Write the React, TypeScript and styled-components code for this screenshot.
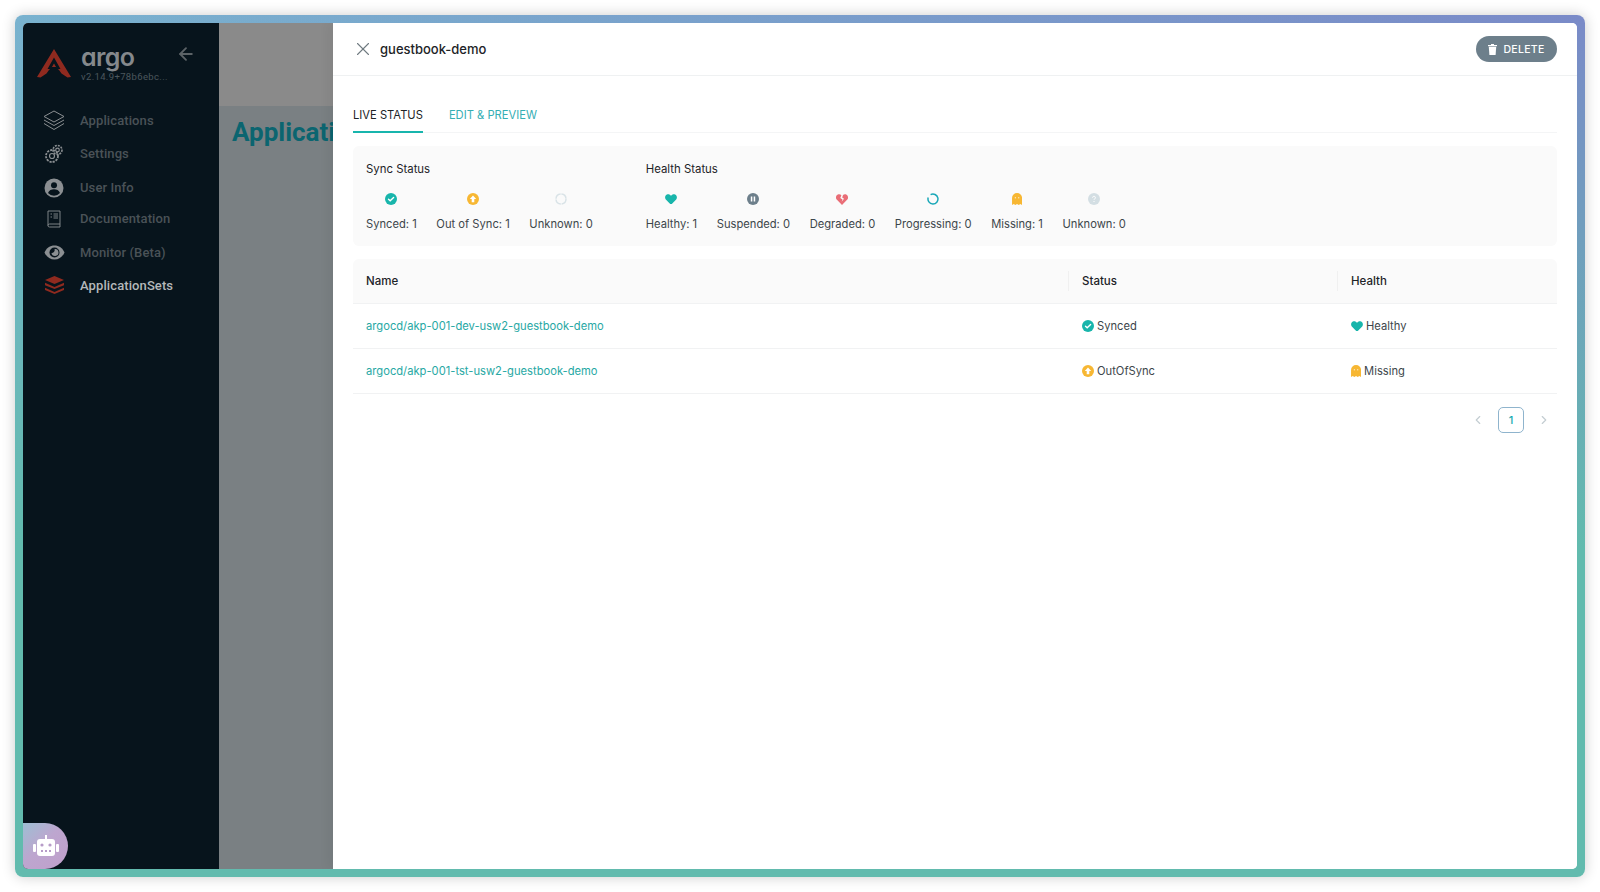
import React from 'react';
import styled, { createGlobalStyle } from 'styled-components';
import { X, ArrowLeft, ChevronLeft, ChevronRight } from 'lucide-react';

const GlobalStyle = createGlobalStyle`
  html, body {
    margin: 0;
    padding: 0;
    height: 892px;
    overflow: hidden;
    background: #fff;
    font-family: Inter, "Liberation Sans", sans-serif;
  }
`;

const Page = styled.div`
  box-sizing: border-box;
  height: 892px;
  padding: 15px;
`;

const Frame = styled.div`
  box-sizing: border-box;
  height: 862px;
  padding: 8px;
  border-radius: 8px;
  background:
    linear-gradient(180deg, rgba(95, 188, 174, 0) 0%, #62bbae 62%),
    linear-gradient(90deg, #79b2cf 0%, #7a8ac8 100%);
  box-shadow: 0 0 14px rgba(0, 0, 0, 0.2);
`;

const Window = styled.div`
  position: relative;
  display: flex;
  height: 846px;
  border-radius: 5px;
  overflow: hidden;
  background: #fff;
`;

const Sidebar = styled.aside`
  flex: 0 0 196px;
  background: #07141c;
  display: flex;
  flex-direction: column;
`;

const Brand = styled.div`
  display: flex;
  padding: 26px 0 0 14px;
  height: 46px;
`;

const BrandText = styled.div`
  margin-left: 10px;
  display: flex;
  flex-direction: column;
  width: 90px;
`;

const BrandName = styled.div`
  font-family: Inter, sans-serif;
  font-feature-settings: "cv11";
  font-size: 25px;
  line-height: 20px;
  margin-top: -2px;
  font-weight: 600;
  letter-spacing: -0.6px;
  color: #85898c;
`;

const Version = styled.div`
  font-family: Roboto, sans-serif;
  font-size: 9.5px;
  line-height: 12px;
  margin-top: 4px;
  letter-spacing: 0.35px;
  color: #4c575d;
  white-space: nowrap;
`;

const Collapse = styled.div`
  margin: -5px 0 0 5px;
  color: #5c6367;
  line-height: 0;
`;

const Nav = styled.nav`
  display: flex;
  flex-direction: column;
  padding-top: 9px;
`;

const NavRow = styled.div<{ $height: number; $active?: boolean }>`
  display: flex;
  align-items: center;
  height: ${(p) => p.$height}px;
  padding-left: 20px;
  font-family: Roboto, sans-serif;
  font-size: 13px;
  font-weight: 500;
  letter-spacing: 0.1px;
  color: ${(p) => (p.$active ? '#b4b8ba' : '#4a5257')};
`;

const NavIcon = styled.span`
  flex: 0 0 22px;
  height: 22px;
  margin-right: 15px;
  display: flex;
  align-items: center;
  justify-content: center;
`;

const Backdrop = styled.div`
  flex: 0 0 114px;
  background: #7a8083;
  overflow: hidden;
`;

const BackdropTop = styled.div`
  height: 83px;
  background: #8a8a8a;
`;

const PageTitle = styled.div`
  margin: 11px 0 0 13px;
  font-family: Roboto, sans-serif;
  font-size: 26px;
  line-height: 30px;
  font-weight: 700;
  white-space: nowrap;
  color: #0b6570;
`;

const Panel = styled.main`
  flex: 1;
  display: flex;
  flex-direction: column;
  background: #fff;
  box-shadow: -5px 0 10px rgba(0, 0, 0, 0.05);
`;

const PanelHeader = styled.header`
  display: flex;
  align-items: center;
  height: 53px;
  box-sizing: border-box;
  border-bottom: 1px solid #eff1f2;
  padding: 0 20px 0 19px;
`;

const CloseButton = styled.span`
  display: flex;
  color: #6f7a80;
  margin-right: 6px;
`;

const PanelTitle = styled.div`
  flex: 1;
  font-size: 13px;
  font-weight: 500;
  color: #1d2327;
`;

const DeleteButton = styled.button`
  display: flex;
  align-items: center;
  justify-content: center;
  gap: 6px;
  width: 81px;
  height: 26px;
  padding: 0;
  border: 0;
  border-radius: 13px;
  background: #6d7f8b;
  color: #fff;
  font-family: Inter, sans-serif;
  font-size: 10.5px;
  font-weight: 500;
  letter-spacing: 0.3px;
`;

const PanelBody = styled.div`
  padding: 0 20px;
`;

const Tabs = styled.div`
  display: flex;
  gap: 26px;
  height: 57px;
  box-sizing: border-box;
  border-bottom: 1px solid #f4f5f6;
`;

const Tab = styled.div<{ $active?: boolean }>`
  box-sizing: border-box;
  height: 57px;
  padding-top: 31px;
  font-size: 11.2px;
  line-height: 16px;
  color: ${(p) => (p.$active ? '#1d2327' : '#36aeb4')};
  border-bottom: 2px solid ${(p) => (p.$active ? '#18b5ad' : 'transparent')};
`;

const Summary = styled.section`
  display: flex;
  gap: 53px;
  height: 100px;
  box-sizing: border-box;
  margin-top: 13px;
  padding: 16px 13px 0;
  border-radius: 6px;
  background: #fafafa;
`;

const SummaryGroup = styled.div`
  display: flex;
  flex-direction: column;
`;

const GroupTitle = styled.div`
  font-size: 11.4px;
  line-height: 14px;
  color: #1d2327;
`;

const GroupItems = styled.div`
  display: flex;
  gap: 19.6px;
  margin-top: 16px;
`;

const StatItem = styled.div`
  display: flex;
  flex-direction: column;
  align-items: center;
  gap: 11px;
  font-size: 11.2px;
  line-height: 14px;
  color: #3d464b;
  white-space: nowrap;
`;

const StatIconBox = styled.span`
  display: flex;
  align-items: center;
  justify-content: center;
  height: 14px;
`;

const Table = styled.section`
  margin-top: 13px;
`;

const TableRow = styled.div<{ $head?: boolean }>`
  display: grid;
  grid-template-columns: 715px 269px 1fr;
  align-items: center;
  height: 45px;
  box-sizing: border-box;
  border-bottom: 1px solid #f1f2f3;
  background: ${(p) => (p.$head ? '#fafafa' : '#fff')};
  font-size: ${(p) => (p.$head ? '11.5px' : '11.2px')};
  font-weight: ${(p) => (p.$head ? 500 : 400)};
  color: ${(p) => (p.$head ? '#1d2327' : '#3d464b')};
  border-radius: ${(p) => (p.$head ? '6px 6px 0 0' : '0')};
`;

const HeadCell = styled.div<{ $divided?: boolean }>`
  padding-left: 13px;
  height: 20px;
  line-height: 20px;
  border-left: ${(p) => (p.$divided ? '1px solid #f0f0f0' : '0')};
`;

const LinkCell = styled.div`
  padding-left: 13px;
  color: #27a8a4;
`;

const StateCell = styled.div`
  padding-left: 14px;
  display: flex;
  align-items: center;
  gap: 3px;
`;

const Pager = styled.div`
  display: flex;
  align-items: center;
  justify-content: flex-end;
  margin-top: 13px;
  padding-right: 6px;
  color: #c4cdd2;
`;

const PageCurrent = styled.div`
  width: 26px;
  height: 26px;
  box-sizing: border-box;
  margin: 0 13px;
  border: 1px solid #8fb4cd;
  border-radius: 5px;
  display: flex;
  align-items: center;
  justify-content: center;
  font-size: 11px;
  font-weight: 500;
  color: #18a9b1;
`;

const RobotBadge = styled.div`
  position: absolute;
  left: 0;
  bottom: 0;
  width: 45px;
  height: 46px;
  border-radius: 0 23px 23px 4px;
  background: linear-gradient(135deg, #9dbfd3 0%, #bda6cf 45%, #c09fcb 100%);
  display: flex;
  align-items: center;
  justify-content: center;
`;

const IconSynced = ({ size = 12 }: { size?: number }) => (
  <svg width={size} height={size} viewBox="0 0 12 12">
    <circle cx="6" cy="6" r="6" fill="#18b5ab" />
    <path d="M3.5 6.2 5.2 7.8 8.6 4.6" fill="none" stroke="#fff" strokeWidth="1.4" strokeLinecap="round" />
  </svg>
);

const IconOutOfSync = ({ size = 12 }: { size?: number }) => (
  <svg width={size} height={size} viewBox="0 0 12 12">
    <circle cx="6" cy="6" r="6" fill="#f7b733" />
    <path d="M6 2.6 9.2 6H7.3v3.2H4.7V6H2.8z" fill="#fff" />
  </svg>
);

const IconRing = () => (
  <svg width={12} height={12} viewBox="0 0 12 12">
    <circle cx="6" cy="6" r="5" fill="none" stroke="#d9e3e7" strokeWidth="1.5" strokeDasharray="7 0.8" />
  </svg>
);

const IconHeart = ({ size = 12 }: { size?: number }) => (
  <svg width={size} height={size * 0.9} viewBox="0 0 12 11">
    <path d="M6 11 .7 5.6C-.6 4-.1 1.3 1.8.5 3.4-.2 5 .4 6 1.800 7 .4 8.6-.2 10.200.5c1.900.8 2.400 3.500 1.100 5.100z" fill="#18b5ab" />
  </svg>
);

const IconPause = () => (
  <svg width={12} height={12} viewBox="0 0 12 12">
    <circle cx="6" cy="6" r="6" fill="#6d7f8b" />
    <rect x="3.8" y="3.5" width="1.5" height="5" fill="#fff" />
    <rect x="6.7" y="3.5" width="1.5" height="5" fill="#fff" />
  </svg>
);

const IconBroken = () => (
  <svg width={12} height={11} viewBox="0 0 12 11">
    <path d="M6 11 .7 5.6C-.6 4-.1 1.3 1.8.5 3.3-.1 4.5.3 5.4 1.2L4.3 4l2.200 1.400L5.700 7.800 8 4.700 6.200 3.500 7 1C8 .2 9-.1 10.200.5c1.900.8 2.400 3.500 1.100 5.100z" fill="#e96d76" />
  </svg>
);

const IconProgress = () => (
  <svg width={12} height={12} viewBox="0 0 12 12">
    <path d="M3.6 1.6a5 5 0 1 1-2.400 2.900" fill="none" stroke="#1ba8b8" strokeWidth="1.5" />
  </svg>
);

const IconGhost = ({ size = 12 }: { size?: number }) => (
  <svg width={size * 0.84} height={size} viewBox="0 0 10 12">
    <path d="M0 5a5 5 0 0 1 10 0v7l-1.700-1L6.700 12 5 11 3.300 12 1.700 11 0 12z" fill="#f7b733" />
    <rect x="2.8" y="4.3" width="1" height="1" fill="#fff" />
    <rect x="6.2" y="4.3" width="1" height="1" fill="#fff" />
  </svg>
);

const IconQuestion = () => (
  <svg width={12} height={12} viewBox="0 0 12 12">
    <circle cx="6" cy="6" r="6" fill="#d3dee3" />
    <path d="M4.6 4.700a1.400 1.400 0 1 1 2.100 1.200c-.5.3-.7.5-.7 1" fill="none" stroke="#fff" strokeWidth="1" />
    <rect x="5.5" y="8" width="1" height="1" fill="#fff" />
  </svg>
);

const ArgoLogo = () => (
  <svg width={34} height={30} viewBox="0 0 34 30" style={{ flex: '0 0 34px' }}>
    <path d="M17 0 34 28 30.500 28.500 24.500 24.500 22 21 17 16 12 21 9.500 24.500 3.500 28.500 0 28z" fill="#8f2a1f" />
    <path d="M17 8.500 23.500 20H20L17 15.500 14 20H10.500z" fill="#07141c" />
    <path d="M17 14.500 19 18H15z" fill="#8f2a1f" />
  </svg>
);

const LayersIcon = () => (
  <svg width={22} height={21} viewBox="0 0 22 21" fill="none" stroke="#8b8f92" strokeWidth="1" strokeLinejoin="round">
    <path d="M11 1 21 6.500 11 12 1 6.500z" />
    <path d="M1 10 11 15.500 21 10" />
    <path d="M1 13.500 11 19.500 21 13.500" />
  </svg>
);

const GearsIcon = () => (
  <svg width={20} height={20} viewBox="0 0 20 20" fill="none" stroke="#8b8f92" strokeWidth="1.2">
    <circle cx="8" cy="12" r="6" strokeDasharray="2.200 1" strokeWidth="1.800" />
    <circle cx="8" cy="12" r="2.500" />
    <circle cx="13.5" cy="6" r="4.500" strokeDasharray="2 1" strokeWidth="1.600" />
    <circle cx="13.5" cy="6" r="1.800" />
  </svg>
);

const UserIcon = () => (
  <svg width={20} height={20} viewBox="0 0 20 20">
    <circle cx="10" cy="10" r="9.500" fill="#8b8f92" />
    <circle cx="10" cy="7.3" r="3" fill="#07141c" />
    <path d="M4 15c1-3 3.500-3.800 6-3.800S15 12 16 15a8 8 0 0 1-12 0z" fill="#07141c" />
  </svg>
);

const DocIcon = () => (
  <svg width={14} height={18} viewBox="0 0 14 18" fill="none" stroke="#8b8f92" strokeWidth="0.9">
    <path d="M1 1h12v13H2.500A1.500 1.500 0 0 0 1 15.500zM1 15.500A1.500 1.500 0 0 0 2.500 17H13v-3" />
    <path d="M3.500 4h1.500M3.500 7h1.500M6.500 4h4.500M6.500 6h4.500M6.500 8h4.500" />
  </svg>
);

const EyeIcon = () => (
  <svg width={21} height={15} viewBox="0 0 21 15">
    <path d="M.5 7.500C2.500 3 6 .5 10.500.5s8 2.500 10 7c-2 4.500-5.500 7-10 7s-8-2.500-10-7z" fill="#8b8f92" />
    <circle cx="10.5" cy="7.5" r="5" fill="#07141c" />
    <path d="M7.500 8a3.500 3.500 0 1 0 3-4 3 3 0 0 1-3 4z" fill="#8b8f92" />
  </svg>
);

const StackIcon = () => (
  <svg width={19} height={18} viewBox="0 0 19 18" fill="#8f2a1f">
    <path d="M9.500 0 19 4 9.500 8 0 4z" />
    <path d="M0 6.800 9.500 11 19 6.800 19 9.200 9.500 13 0 9.200z" />
    <path d="M0 11.800 9.500 16 19 11.800 19 14 9.500 18 0 14z" />
  </svg>
);

const TrashIcon = () => (
  <svg width={9} height={11} viewBox="0 0 9 11" fill="#fff">
    <rect x="0" y="1" width="9" height="1.2" />
    <rect x="3" y="0" width="3" height="1" />
    <path d="M.8 2.800h7.400L7.600 11H1.400z" />
  </svg>
);

const RobotIcon = () => (
  <svg width={26} height={22} viewBox="0 0 26 22" fill="#fff">
    <rect x="12" y="0" width="2" height="5" />
    <rect x="4" y="4" width="18" height="17" rx="3" />
    <rect x="0" y="9" width="3" height="8" rx="1" />
    <rect x="23" y="9" width="3" height="8" rx="1" />
    <circle cx="9" cy="10" r="1.6" fill="#b79cc8" />
    <circle cx="17" cy="10" r="1.6" fill="#b79cc8" />
    <rect x="8" y="15" width="2" height="2" fill="#b79cc8" />
    <rect x="12" y="15" width="2" height="2" fill="#b79cc8" />
    <rect x="16" y="15" width="2" height="2" fill="#b79cc8" />
  </svg>
);

const navItems = [
  { label: 'Applications', height: 33, icon: <LayersIcon /> },
  { label: 'Settings', height: 33, icon: <GearsIcon /> },
  { label: 'User Info', height: 35, icon: <UserIcon /> },
  { label: 'Documentation', height: 27, icon: <DocIcon /> },
  { label: 'Monitor (Beta)', height: 41, icon: <EyeIcon /> },
  { label: 'ApplicationSets', height: 24, icon: <StackIcon />, active: true },
];

const syncStats = [
  { label: 'Synced: 1', icon: <IconSynced /> },
  { label: 'Out of Sync: 1', icon: <IconOutOfSync /> },
  { label: 'Unknown: 0', icon: <IconRing /> },
];

const healthStats = [
  { label: 'Healthy: 1', icon: <IconHeart /> },
  { label: 'Suspended: 0', icon: <IconPause /> },
  { label: 'Degraded: 0', icon: <IconBroken /> },
  { label: 'Progressing: 0', icon: <IconProgress /> },
  { label: 'Missing: 1', icon: <IconGhost /> },
  { label: 'Unknown: 0', icon: <IconQuestion /> },
];

const rows = [
  {
    name: 'argocd/akp-001-dev-usw2-guestbook-demo',
    status: 'Synced',
    statusIcon: <IconSynced />,
    health: 'Healthy',
    healthIcon: <IconHeart />,
  },
  {
    name: 'argocd/akp-001-tst-usw2-guestbook-demo',
    status: 'OutOfSync',
    statusIcon: <IconOutOfSync />,
    health: 'Missing',
    healthIcon: <IconGhost />,
  },
];

export default function App() {
  return (
    <>
      <GlobalStyle />
      <Page>
        <Frame>
          <Window>
            <Sidebar>
              <Brand>
                <ArgoLogo />
                <BrandText>
                  <BrandName>argo</BrandName>
                  <Version>v2.14.9+78b6ebc...</Version>
                </BrandText>
                <Collapse>
                  <ArrowLeft size={20} strokeWidth={2.2} />
                </Collapse>
              </Brand>
              <Nav>
                {navItems.map((item) => (
                  <NavRow key={item.label} $height={item.height} $active={item.active}>
                    <NavIcon>{item.icon}</NavIcon>
                    {item.label}
                  </NavRow>
                ))}
              </Nav>
            </Sidebar>
            <Backdrop>
              <BackdropTop />
              <PageTitle>Applications</PageTitle>
            </Backdrop>
            <Panel>
              <PanelHeader>
                <CloseButton>
                  <X size={22} strokeWidth={1.2} />
                </CloseButton>
                <PanelTitle>guestbook-demo</PanelTitle>
                <DeleteButton>
                  <TrashIcon />
                  DELETE
                </DeleteButton>
              </PanelHeader>
              <PanelBody>
                <Tabs>
                  <Tab $active>LIVE STATUS</Tab>
                  <Tab>EDIT &amp; PREVIEW</Tab>
                </Tabs>
                <Summary>
                  <SummaryGroup>
                    <GroupTitle>Sync Status</GroupTitle>
                    <GroupItems>
                      {syncStats.map((s) => (
                        <StatItem key={s.label}>
                          <StatIconBox>{s.icon}</StatIconBox>
                          {s.label}
                        </StatItem>
                      ))}
                    </GroupItems>
                  </SummaryGroup>
                  <SummaryGroup>
                    <GroupTitle>Health Status</GroupTitle>
                    <GroupItems>
                      {healthStats.map((s) => (
                        <StatItem key={s.label}>
                          <StatIconBox>{s.icon}</StatIconBox>
                          {s.label}
                        </StatItem>
                      ))}
                    </GroupItems>
                  </SummaryGroup>
                </Summary>
                <Table>
                  <TableRow $head>
                    <HeadCell>Name</HeadCell>
                    <HeadCell $divided>Status</HeadCell>
                    <HeadCell $divided>Health</HeadCell>
                  </TableRow>
                  {rows.map((r) => (
                    <TableRow key={r.name}>
                      <LinkCell>{r.name}</LinkCell>
                      <StateCell>
                        {r.statusIcon}
                        {r.status}
                      </StateCell>
                      <StateCell>
                        {r.healthIcon}
                        {r.health}
                      </StateCell>
                    </TableRow>
                  ))}
                </Table>
                <Pager>
                  <ChevronLeft size={14} />
                  <PageCurrent>1</PageCurrent>
                  <ChevronRight size={14} />
                </Pager>
              </PanelBody>
            </Panel>
            <RobotBadge>
              <RobotIcon />
            </RobotBadge>
          </Window>
        </Frame>
      </Page>
    </>
  );
}
